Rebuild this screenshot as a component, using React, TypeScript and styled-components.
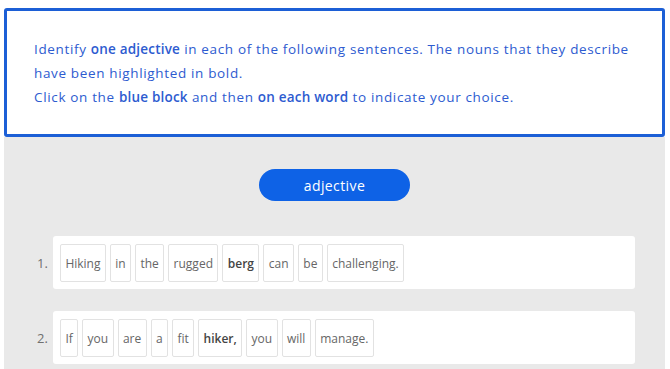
import styled, { createGlobalStyle } from "styled-components";

const GlobalStyle = createGlobalStyle`
  body {
    margin: 0;
    background: #ffffff;
    font-family: "Open Sans", "Liberation Sans", sans-serif;
  }
`;

const sentences: { words: string[]; nouns: string[] }[] = [
  {
    words: ["Hiking", "in", "the", "rugged", "berg", "can", "be", "challenging."],
    nouns: ["berg"],
  },
  {
    words: ["If", "you", "are", "a", "fit", "hiker,", "you", "will", "manage."],
    nouns: ["hiker,"],
  },
];

const App = () => {
  return (
    <>
      <GlobalStyle />
      <Page>
        <Instructions>
          <p>
            Identify <b>one adjective</b> in each of the following sentences. The nouns that they describe
            <br />
            have been highlighted in bold.
          </p>
          <p>
            Click on the <b>blue block</b> and then <b>on each word</b> to indicate your choice.
          </p>
        </Instructions>
        <Workspace>
          <BlockButton>adjective</BlockButton>
          <SentenceList>
            {sentences.map((s, i) => (
              <SentenceRow key={i}>
                <Number>{i + 1}.</Number>
                <SentenceCard>
                  {s.words.map((w, j) => (
                    <WordChip key={j} $bold={s.nouns.includes(w)}>
                      {w}
                    </WordChip>
                  ))}
                </SentenceCard>
              </SentenceRow>
            ))}
          </SentenceList>
        </Workspace>
      </Page>
    </>
  );
};

export default App;

const Page = styled.div`
  width: 661px;
  padding: 8px 0 0 4px;
`;

const Instructions = styled.div`
  border: 3px solid #1c5fd6;
  border-radius: 3px;
  padding: 26px 20px 25px 27px;
  color: #2d5bd0;
  font-size: 13.5px;
  letter-spacing: 0.65px;
  line-height: 24px;
  white-space: nowrap;

  p {
    margin: 0;
  }
  b {
    font-weight: 600;
    letter-spacing: 0.2px;
  }
`;

const Workspace = styled.div`
  background: #e9e9e9;
  padding-top: 32px;
  padding-bottom: 20px;
  display: flex;
  flex-direction: column;
  align-items: center;
`;

const BlockButton = styled.button`
  width: 151px;
  height: 32px;
  border: none;
  border-radius: 16px;
  background: #0e62e6;
  color: #ffffff;
  font-family: "Open Sans", "Liberation Sans", sans-serif;
  font-size: 14px;
  letter-spacing: 0.4px;
  cursor: pointer;
`;

const SentenceList = styled.div`
  align-self: stretch;
  margin-top: 35px;
  display: flex;
  flex-direction: column;
  gap: 22px;
  padding: 0 30px 0 33px;
`;

const SentenceRow = styled.div`
  display: flex;
  align-items: center;
`;

const Number = styled.span`
  width: 11px;
  margin-right: 5px;
  font-size: 13px;
  color: #707070;
`;

const SentenceCard = styled.div`
  flex: 1;
  background: #ffffff;
  border-radius: 3px;
  padding: 8px 7px 7px;
  display: flex;
  gap: 4px;
`;

const WordChip = styled.span<{ $bold?: boolean }>`
  height: 38px;
  box-sizing: border-box;
  padding: 0 4.4px;
  border: 1px solid #e2e2e2;
  border-radius: 2px;
  display: flex;
  align-items: center;
  font-size: 12px;
  color: ${(p) => (p.$bold ? "#444444" : "#666666")};
  font-weight: ${(p) => (p.$bold ? 600 : 400)};
`;
